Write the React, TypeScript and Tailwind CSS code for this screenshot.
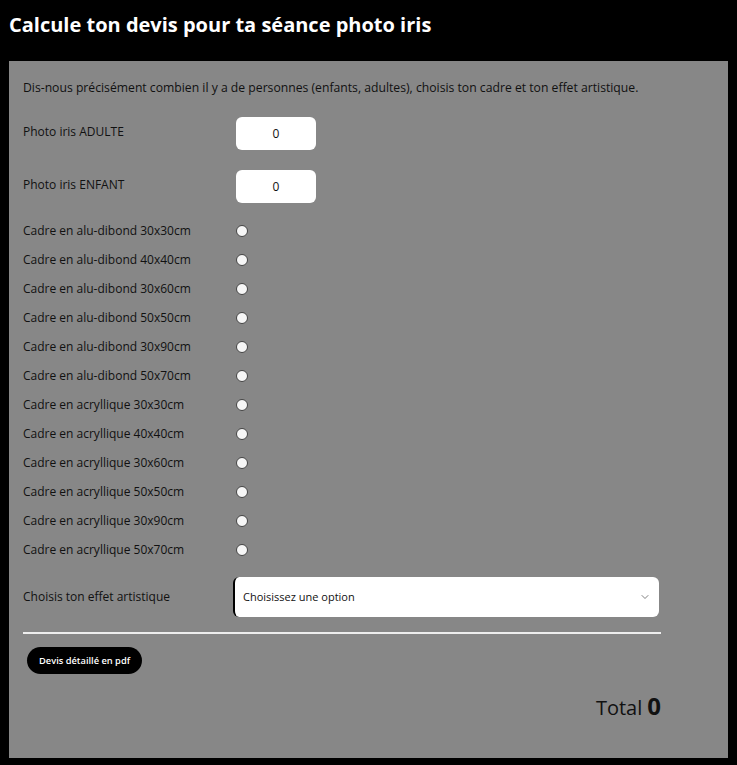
import { ChevronDown } from "lucide-react";

const frames = [
  "Cadre en alu-dibond 30x30cm",
  "Cadre en alu-dibond 40x40cm",
  "Cadre en alu-dibond 30x60cm",
  "Cadre en alu-dibond 50x50cm",
  "Cadre en alu-dibond 30x90cm",
  "Cadre en alu-dibond 50x70cm",
  "Cadre en acryllique 30x30cm",
  "Cadre en acryllique 40x40cm",
  "Cadre en acryllique 30x60cm",
  "Cadre en acryllique 50x50cm",
  "Cadre en acryllique 30x90cm",
  "Cadre en acryllique 50x70cm",
];

export default function App() {
  return (
    <div className="min-h-[765px] bg-black px-[9px] pb-[9px] text-[#111]" style={{ fontFamily: '"Open Sans", sans-serif' }}>
      <h1 className="pt-[10px] pb-[21px] text-[20px] font-bold leading-[30px] text-white">
        Calcule ton devis pour ta séance photo iris
      </h1>

      <div className="w-[719px] bg-[#878787] pl-[14px] pr-[67px] pt-[18px] pb-[35px]">
        <p className="text-[12.2px] leading-[18px]">
          Dis-nous précisément combien il y a de personnes (enfants, adultes), choisis ton cadre et ton effet artistique.
        </p>

        {/* quantities */}
        <div className="mt-[20px] flex flex-col gap-[20px]">
          {["Photo iris ADULTE", "Photo iris ENFANT"].map((label) => (
            <div key={label} className="flex items-start">
              <span className="w-[213px] pt-[6px] text-[12px] leading-[18px]">{label}</span>
              <div className="flex h-[33px] w-[80px] items-center justify-center rounded-[6px] bg-white text-[12px]">0</div>
            </div>
          ))}
        </div>

        {/* frames */}
        <div className="mt-[13px] flex flex-col">
          {frames.map((f) => (
            <div key={f} className="flex h-[29px] items-center">
              <span className="w-[213px] text-[12px] leading-[18px]">{f}</span>
              <span className="h-[12px] w-[12px] rounded-full border border-[#444] bg-[#f6f6f6]" />
            </div>
          ))}
        </div>

        {/* effect */}
        <div className="mt-[13px] flex items-center">
          <span className="w-[210px] text-[12px] leading-[18px]">Choisis ton effet artistique</span>
          <div className="flex h-[40px] w-[426px] items-center justify-between rounded-[6px] border-l-2 border-black bg-white pl-[8px] pr-[8px]">
            <span className="text-[11px]">Choisissez une option</span>
            <ChevronDown size={12} strokeWidth={1.5} className="text-[#555]" />
          </div>
        </div>

        <div className="mt-[15px] h-[2px] w-[638px] bg-[#eeeeee]" />

        <button className="ml-[4px] mt-[13px] h-[27px] rounded-full bg-black px-[12px] text-[9.3px] font-semibold text-white">
          Devis détaillé en pdf
        </button>

        <div className="mt-[17px] flex w-[638px] items-baseline justify-end gap-[5px]">
          <span className="text-[20px] leading-[30px]">Total</span>
          <span className="text-[24px] font-bold leading-[30px]">0</span>
        </div>
      </div>
    </div>
  );
}
